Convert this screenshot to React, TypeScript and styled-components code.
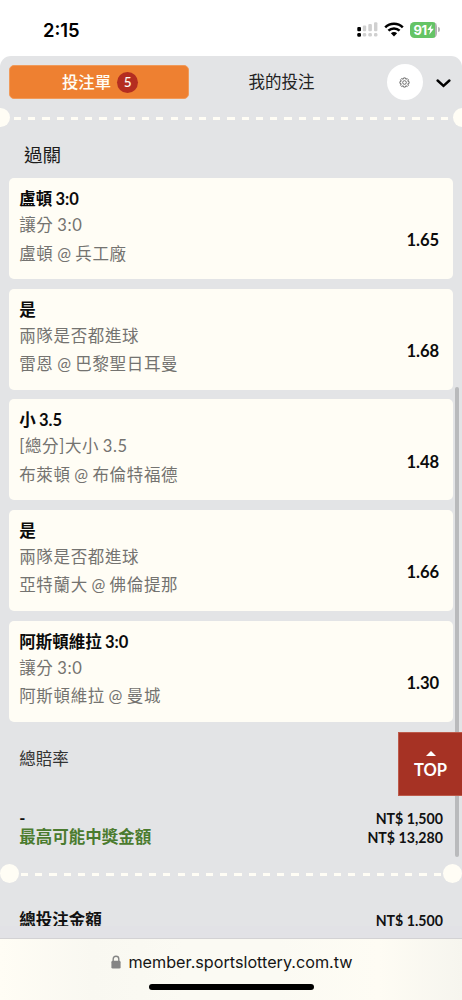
import React from "react";
import styled, { createGlobalStyle } from "styled-components";

const GlobalStyle = createGlobalStyle`
  * { box-sizing: border-box; }
  html, body { margin: 0; padding: 0; background: #fff; }
  body { overflow: hidden; font-family: Lato, "Noto Sans CJK TC", sans-serif; color: #111; }
`;

const Phone = styled.div`
  position: relative;
  width: 462px;
  height: 1000px;
  display: flex;
  flex-direction: column;
  overflow: hidden;
  background: #fff;
`;

const StatusBar = styled.header`
  flex: none;
  height: 56px;
  padding: 3px 22px 0 43px;
  display: flex;
  align-items: center;
  justify-content: space-between;
`;

const Clock = styled.span`
  font: 600 18.4px/22px Inter, sans-serif;
  color: #000;
`;

const StatusIcons = styled.div`
  display: flex;
  align-items: center;
  gap: 6px;
  svg { display: block; }
`;

const Battery = styled.div`
  display: flex;
  align-items: center;
  gap: 1px;
`;

const BatteryBody = styled.div`
  width: 27px;
  height: 16px;
  border-radius: 4.5px;
  background: linear-gradient(90deg, #65c466 91%, #b3b3b3 91%);
  display: flex;
  align-items: center;
  justify-content: center;
  font: 700 13px/16px Inter, sans-serif;
  letter-spacing: -0.4px;
  color: #fff;
`;

const BatteryTip = styled.div`
  width: 2px;
  height: 5px;
  border-radius: 0 2px 2px 0;
  background: #b8b8b8;
`;

const Sheet = styled.main`
  flex: none;
  height: 870px;
  overflow: hidden;
  background: #e3e4e6;
  border-radius: 11px 11px 0 0;
`;

const Tabs = styled.nav`
  height: 52px;
  padding: 9px 10px 0 9px;
  display: flex;
  align-items: flex-start;
`;

const SlipTab = styled.button`
  width: 180px;
  height: 34px;
  padding: 0 0 0 2px;
  border: 1px solid #f09a5a;
  border-radius: 5px;
  background: #ee8031;
  color: #fffdf5;
  display: flex;
  align-items: center;
  justify-content: center;
  gap: 6px;
  font: 500 16.4px/24px Lato, "Noto Sans CJK TC", sans-serif;
`;

const Count = styled.span`
  width: 21px;
  height: 21px;
  border-radius: 50%;
  background: #b42d20;
  font-size: 13.5px;
  line-height: 21px;
  text-align: center;
`;

const MyTab = styled.button`
  width: 185px;
  height: 34px;
  padding: 0;
  border: 0;
  background: none;
  color: #222;
  font: 400 16.5px/24px Lato, "Noto Sans CJK TC", sans-serif;
`;

const GearButton = styled.button`
  width: 36px;
  height: 36px;
  margin: -1px 13.5px 0 12.8px;
  padding: 0;
  border: 0;
  border-radius: 50%;
  background: #fff;
  display: grid;
  place-items: center;
`;

const CollapseButton = styled.button`
  height: 34px;
  padding: 2px 0 0;
  border: 0;
  background: none;
  display: flex;
  align-items: center;
`;

const Divider = styled.div<{ $bleed?: boolean }>`
  height: 19px;
  margin: 0 ${(p) => (p.$bleed ? "-9.5px" : "0")};
  display: flex;
  align-items: center;
  justify-content: space-between;
`;

const Notch = styled.i`
  flex: none;
  width: 19px;
  height: 19px;
  border-radius: 50%;
  background: #fffdf5;
`;

const Dashes = styled.div<{ $start: number }>`
  flex: 1;
  height: 2.4px;
  margin: 2px 2.5px 0 ${(p) => p.$start}px;
  background: repeating-linear-gradient(90deg, #fffdf5 0 7.2px, transparent 7.2px 14.23px);
`;

const SectionTitle = styled.h2`
  height: 51px;
  margin: 0;
  padding: 15px 0 0 24px;
  font-size: 18.6px;
  line-height: 26px;
  font-weight: 400;
  color: #1c1c1c;
`;

const BetList = styled.section`
  padding: 0 9.4px 0 9.3px;
  display: flex;
  flex-direction: column;
  gap: 9.65px;
`;

const BetCard = styled.article`
  height: 101px;
  padding: 10px 13.4px 0 9.9px;
  border-radius: 5px;
  background: #fffdf5;
  display: flex;
  justify-content: space-between;
`;

const Pick = styled.h3`
  margin: 0;
  font-size: 16.5px;
  line-height: 23px;
  font-weight: 700;
  word-spacing: -0.8px;
  color: #0b0b0b;
`;

const Detail = styled.p`
  margin: 0;
  font-size: 16.5px;
  line-height: 28.5px;
  letter-spacing: 0.65px;
  word-spacing: -1.2px;
  color: #747370;
`;

const Odds = styled.strong`
  padding-top: 40.3px;
  font-size: 16.6px;
  line-height: 24px;
  font-weight: 700;
  color: #0b0b0b;
`;

const TotalOdds = styled.div`
  height: 88px;
  padding: 25.4px 19.2px 0;
  font-size: 16.5px;
  line-height: 24px;
  color: #333;
`;

const SumRow = styled.div<{ $green?: boolean }>`
  height: 19px;
  padding: 0 19px 0 19.2px;
  display: flex;
  justify-content: space-between;
  font-size: 16.5px;
  line-height: 19px;
  font-weight: 700;
  color: ${(p) => (p.$green ? "#4b7b2f" : "#111")};
`;

const Amount = styled.span`
  font-size: 14.2px;
  font-weight: 700;
  color: #111;
`;

const Sums = styled.section`
  height: 55.3px;
  margin-top: -0.8px;
`;

const GrandTotal = styled.div`
  height: 43px;
  padding-top: 28px;
  overflow: hidden;
  color: #111;
`;

const ScrollThumb = styled.div`
  position: absolute;
  right: 3.5px;
  top: 387px;
  width: 3.5px;
  height: 470px;
  border-radius: 2px;
  background: #b9babc;
`;

const TopButton = styled.button`
  position: absolute;
  right: 0;
  top: 732px;
  width: 64px;
  height: 64px;
  padding: 18px 0 0;
  border: 1px solid #bd5a4a;
  border-right: 0;
  background: #a63224;
  color: #fff;
  display: flex;
  flex-direction: column;
  align-items: center;
  gap: 3px;
  font: 700 16.5px/22px Lato, sans-serif;
  svg { flex: none; display: block; }
`;

const BrowserBar = styled.footer`
  position: relative;
  flex: 1;
  margin-top: 12px;
  border-top: 1px solid #d3d2d4;
  background: linear-gradient(90deg, #fffdf5 0%, #f9f8f1 20%, #fbfaf3 40%, #fbfaf3 60%, #fefcf4 82%, #f6f5ee 100%);
  display: flex;
  flex-direction: column;
  align-items: center;
`;

const SheetTail = styled.div`
  flex: none;
  height: 12px;
  margin-bottom: -12px;
  background: #e2e2e6;
`;

const Address = styled.div`
  height: 45px;
  padding: 0 0 0 2px;
  display: flex;
  align-items: center;
  gap: 7px;
  font: 400 16.2px/22px Inter, sans-serif;
  color: #151515;
`;

const HomeIndicator = styled.div`
  width: 165px;
  height: 6px;
  border-radius: 3px;
  background: #000;
`;

const bets = [
  { pick: "盧頓 3:0", market: "讓分 3:0", match: "盧頓 @ 兵工廠", odds: "1.65" },
  { pick: "是", market: "兩隊是否都進球", match: "雷恩 @ 巴黎聖日耳曼", odds: "1.68" },
  { pick: "小 3.5", market: "[總分]大小 3.5", match: "布萊頓 @ 布倫特福德", odds: "1.48" },
  { pick: "是", market: "兩隊是否都進球", match: "亞特蘭大 @ 佛倫提那", odds: "1.66" },
  { pick: "阿斯頓維拉 3:0", market: "讓分 3:0", match: "阿斯頓維拉 @ 曼城", odds: "1.30" },
];

const SignalIcon = () => (
  <svg width="21" height="15" viewBox="0 0 21 15">
    <rect x="0.3" y="5" width="3.7" height="4.3" rx="1.1" fill="#000" />
    <rect x="5.8" y="3.4" width="3.4" height="5.9" rx="1.1" fill="#d0d0d0" />
    <rect x="11.3" y="2" width="3.6" height="7.3" rx="1.1" fill="#d0d0d0" />
    <rect x="17" y="0.2" width="3.4" height="9.1" rx="1.1" fill="#d0d0d0" />
    <rect x="0.3" y="11" width="3.7" height="3.8" rx="1.3" fill="#000" />
    <rect x="5.8" y="11" width="3.4" height="3.6" rx="1.3" fill="#d0d0d0" />
    <rect x="11.3" y="11" width="3.6" height="3.6" rx="1.3" fill="#d0d0d0" />
    <rect x="17" y="11" width="3.4" height="3.6" rx="1.3" fill="#d0d0d0" />
  </svg>
);

const WifiIcon = () => (
  <svg width="20" height="15" viewBox="0 0 20 15">
    <g fill="none" stroke="#000" strokeWidth="2.5">
      <path d="M1.2 5.3C6.1.4 13.9.4 18.8 5.3" />
      <path d="M4.4 8.7c3.1-3.1 8.1-3.1 11.2 0" />
    </g>
    <path d="M10 14.5 6.9 11.3c1.7-1.6 4.5-1.6 6.2 0Z" fill="#000" />
  </svg>
);

const BoltIcon = () => (
  <svg width="7" height="11" viewBox="0 0 7 11">
    <path d="M4.9.3.3 6.1h2.9L2.2 10.7 6.8 4.8H3.9Z" fill="#fff" />
  </svg>
);

const GearIcon = () => (
  <svg width="11" height="11" viewBox="0 0 24 24" fill="none" stroke="#555" strokeWidth="1.8" strokeLinejoin="round">
    <path d="m10 2 4 0 1 3 3-1.5 2.7 2.7L19 9l3 1v4l-3 1 1.7 3-2.7 2.7L15 19l-1 3h-4l-1-3-3 1.7L3.3 18 5 15l-3-1v-4l3-1-1.7-3L6 3.4 9 5Z" />
    <circle cx="12" cy="12" r="4" />
  </svg>
);

const ChevronIcon = () => (
  <svg width="15" height="9" viewBox="0 0 15 9">
    <path d="m1.6 1.5 5.9 5.4 5.9-5.4" fill="none" stroke="#000" strokeWidth="2.4" strokeLinecap="round" />
  </svg>
);

const LockIcon = () => (
  <svg width="10" height="14" viewBox="0 0 10 14">
    <rect x="0.4" y="5.8" width="9.2" height="7.8" rx="1.4" fill="#858585" />
    <path d="M2.2 6.5V4a2.8 2.8 0 0 1 5.6 0v2.5" fill="none" stroke="#858585" strokeWidth="1.4" />
  </svg>
);

export default function App() {
  return (
    <Phone>
      <GlobalStyle />
      <StatusBar>
        <Clock>2:15</Clock>
        <StatusIcons>
          <SignalIcon />
          <WifiIcon />
          <Battery>
            <BatteryBody>
              91
              <BoltIcon />
            </BatteryBody>
            <BatteryTip />
          </Battery>
        </StatusIcons>
      </StatusBar>

      <Sheet>
        <Tabs>
          <SlipTab>
            投注單<Count>5</Count>
          </SlipTab>
          <MyTab>我的投注</MyTab>
          <GearButton>
            <GearIcon />
          </GearButton>
          <CollapseButton>
            <ChevronIcon />
          </CollapseButton>
        </Tabs>
        <Divider $bleed>
          <Notch />
          <Dashes $start={4.5} />
          <Notch />
        </Divider>
        <SectionTitle>過關</SectionTitle>
        <BetList>
          {bets.map((bet) => (
            <BetCard key={bet.match}>
              <div>
                <Pick>{bet.pick}</Pick>
                <Detail>{bet.market}</Detail>
                <Detail>{bet.match}</Detail>
              </div>
              <Odds>{bet.odds}</Odds>
            </BetCard>
          ))}
        </BetList>
        <TotalOdds>總賠率</TotalOdds>
        <Sums>
          <SumRow>
            <span>-</span>
            <Amount>NT$ 1,500</Amount>
          </SumRow>
          <SumRow $green>
            <span>最高可能中獎金額</span>
            <Amount>NT$ 13,280</Amount>
          </SumRow>
        </Sums>
        <Divider>
          <Notch />
          <Dashes $start={2.2} />
          <Notch />
        </Divider>
        <GrandTotal>
          <SumRow>
            <span>總投注金額</span>
            <Amount>NT$ 1,500</Amount>
          </SumRow>
        </GrandTotal>
      </Sheet>
      <SheetTail />
      <BrowserBar>
        <Address>
          <LockIcon />
          member.sportslottery.com.tw
        </Address>
        <HomeIndicator />
      </BrowserBar>
      <ScrollThumb />
      <TopButton>
        <svg width="10" height="5" viewBox="0 0 10 5">
          <path d="M5 0 10 5H0Z" fill="#fff" />
        </svg>
        TOP
      </TopButton>
    </Phone>
  );
}
